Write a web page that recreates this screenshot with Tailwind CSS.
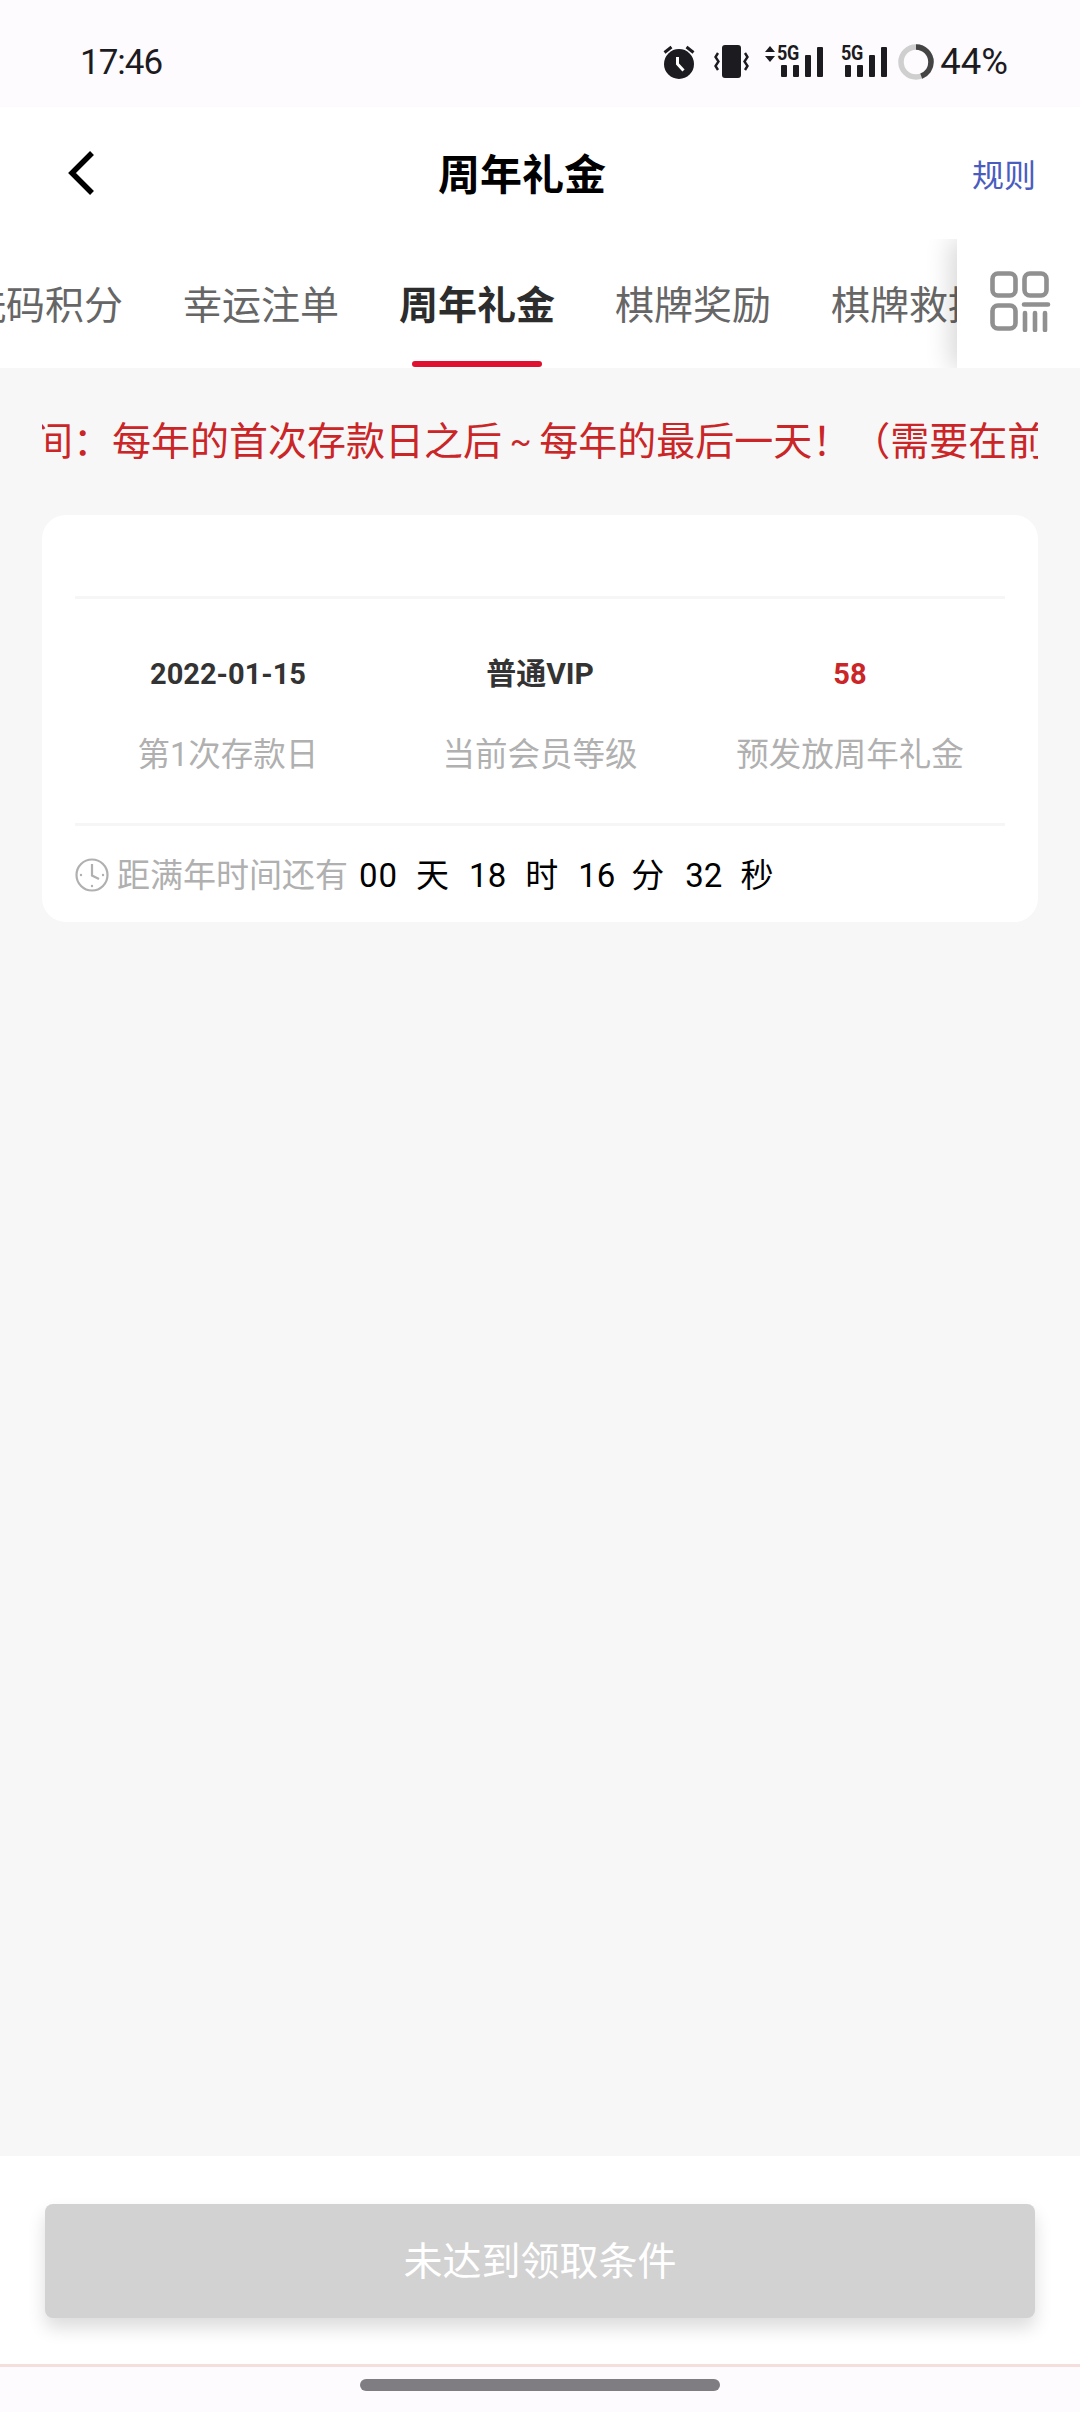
<!DOCTYPE html>
<html lang="zh-CN">
<head>
    <meta charset="UTF-8">
    <meta name="viewport" content="width=device-width, initial-scale=1.0">
    <title>周年礼金</title>
    <script src="https://cdn.jsdelivr.net/npm/@tailwindcss/browser@4"></script>
</head>
<body class="bg-[#f7f7f7] font-['Roboto','Noto_Sans_CJK_SC',sans-serif]">
    <div class="w-[1080px] h-[2412px] flex flex-col overflow-hidden">
        <!-- Status bar -->
        <div class="h-[107px] shrink-0 bg-[#fdfbfe] flex items-center justify-between pt-[17px] pl-[80px] pr-[72px] text-[#1c1b1f]">
            <span class="text-[35px] leading-none tracking-[-1px]">17:46</span>
            <div class="flex items-center">
                <svg width="32" height="34" viewBox="0 0 32 34" class="mr-[19px]">
                    <circle cx="16" cy="19" r="15" fill="#1c1b1f"/>
                    <path d="M1.5 7.5 8.5 2M30.5 7.5 23.5 2" stroke="#1c1b1f" stroke-width="3" fill="none"/>
                    <path d="M14.5 12v7l6 6.5" stroke="#fff" stroke-width="3" fill="none"/>
                </svg>
                <svg width="36" height="34" viewBox="0 0 36 34" class="mr-[15px]">
                    <rect x="8" y="0" width="19" height="33" rx="3" fill="#1c1b1f"/>
                    <path d="M4 8 1.5 12 4.5 16.5 1.5 21 4 25M31 8 33.5 12 30.5 16.5 33.5 21 31 25" stroke="#1c1b1f" stroke-width="2.4" fill="none"/>
                </svg>
                <div class="relative w-[58px] h-[34px] mr-[18px]">
                    <svg width="10" height="16" viewBox="0 0 10 16" class="absolute left-0 top-[1px]">
                        <path d="M5 0 10 6H0ZM5 16 10 10H0Z" fill="#1c1b1f"/>
                    </svg>
                    <span class="absolute left-[12px] top-[-2px] text-[20px] leading-[20px] font-bold tracking-[-0.5px] scale-x-90 origin-left">5G</span>
                    <div class="absolute left-[16px] bottom-[2px] flex items-end gap-[6px]">
                        <span class="block w-[6px] h-[12px] bg-[#1c1b1f] rounded-[1px]"></span>
                        <span class="block w-[6px] h-[12px] bg-[#1c1b1f] rounded-[1px]"></span>
                        <span class="block w-[6px] h-[22px] bg-[#1c1b1f] rounded-[1px]"></span>
                        <span class="block w-[6px] h-[30px] bg-[#1c1b1f] rounded-[1px]"></span>
                    </div>
                </div>
                <div class="relative w-[46px] h-[34px] mr-[11px]">
                    <span class="absolute left-0 top-[-2px] text-[20px] leading-[20px] font-bold tracking-[-0.5px] scale-x-90 origin-left">5G</span>
                    <div class="absolute left-[4px] bottom-[2px] flex items-end gap-[6px]">
                        <span class="block w-[6px] h-[12px] bg-[#1c1b1f] rounded-[1px]"></span>
                        <span class="block w-[6px] h-[12px] bg-[#1c1b1f] rounded-[1px]"></span>
                        <span class="block w-[6px] h-[22px] bg-[#1c1b1f] rounded-[1px]"></span>
                        <span class="block w-[6px] h-[30px] bg-[#1c1b1f] rounded-[1px]"></span>
                    </div>
                </div>
                <svg width="36" height="36" viewBox="0 0 36 36" class="mr-[6px]">
                    <circle cx="18" cy="18" r="15" fill="none" stroke="#cfcfcf" stroke-width="5.5"/>
                    <circle cx="18" cy="18" r="15" fill="none" stroke="#444" stroke-width="5.5" stroke-dasharray="41.5 100" transform="rotate(-90 18 18)"/>
                </svg>
                <span class="text-[36.5px] leading-none">44%</span>
            </div>
        </div>

        <!-- Title bar -->
        <div class="h-[132px] shrink-0 bg-white relative flex items-center justify-center pr-[36px] pt-[5px]">
            <svg width="30" height="46" viewBox="0 0 30 46" class="absolute left-[66px] top-[43px]">
                <path d="M26 3 6 23 26 43" stroke="#000" stroke-width="5.5" fill="none"/>
            </svg>
            <span class="text-[42px] font-bold text-black">周年礼金</span>
            <span class="absolute right-[44px] text-[32px] text-[#4a5cc0]">规则</span>
        </div>

        <!-- Tabs -->
        <div class="h-[129px] shrink-0 bg-white relative overflow-hidden">
            <div class="flex gap-[60px] ml-[-33px] pt-[44px] text-[39px] leading-[46px] text-[#666] whitespace-nowrap">
                <span>洗码积分</span>
                <span>幸运注单</span>
                <span class="relative font-bold text-[#2c2c2c]">周年礼金
                    <span class="absolute left-[13px] right-[13px] top-[78px] h-[6px] rounded-full bg-[#e01030]"></span>
                </span>
                <span>棋牌奖励</span>
                <span>棋牌救援金</span>
            </div>
            <div class="absolute right-0 top-0 bottom-0 w-[123px] bg-white shadow-[-6px_0_24px_rgba(0,0,0,0.16)] flex items-center justify-center">
                <svg width="62" height="62" viewBox="0 0 62 62" class="mr-[-3px] mb-[5px]">
                    <g fill="none" stroke="#909090" stroke-width="4.6">
                        <rect x="3.5" y="3.5" width="23" height="22" rx="5.5"/>
                        <rect x="35.5" y="3.5" width="22" height="22" rx="5.5"/>
                        <rect x="3.5" y="35.5" width="23" height="23" rx="5.5"/>
                        <path d="M35 34.5H59M36 43V60M46 43V60M56 43V60" stroke-linecap="round"/>
                    </g>
                </svg>
            </div>
        </div>

        <!-- Content -->
        <div class="flex-1 px-[42px]">
            <div class="h-[147px] flex items-center overflow-hidden">
                <p class="text-[39px] leading-[46px] text-[#ca2527] whitespace-nowrap ml-[-47px] mt-[2px]">时间：每年的首次存款日之后 <span class="relative top-[-3px] mx-[-2px] text-[32px]">~</span> 每年的最后一天！（需要在前一年有存款）</p>
            </div>
            <div class="h-[407px] bg-white rounded-[24px] px-[33px]">
                <div class="h-[84px] border-b-[3px] border-[#f6f6f6]"></div>
                <div class="h-[227px] border-b-[3px] border-[#f6f6f6] grid grid-cols-[306px_318px_302px] text-center">
                    <div class="pt-[55px]">
                        <p class="text-[29px] leading-[40px] font-bold text-[#333]">2022-01-15</p>
                        <p class="text-[32.5px] leading-[40px] mt-[41px] text-[#b0b0b0]">第1次存款日</p>
                    </div>
                    <div class="pt-[55px]">
                        <p class="text-[30px] leading-[40px] font-bold text-[#333]">普通VIP</p>
                        <p class="text-[32.5px] leading-[40px] mt-[41px] text-[#b0b0b0]">当前会员等级</p>
                    </div>
                    <div class="pt-[55px]">
                        <p class="text-[29px] leading-[40px] font-bold text-[#ca2527]">58</p>
                        <p class="text-[32.5px] leading-[40px] mt-[41px] text-[#b0b0b0]">预发放周年礼金</p>
                    </div>
                </div>
                <div class="h-[96px] flex items-center pt-[4px] whitespace-nowrap text-[33px] text-black">
                    <svg width="34" height="36" viewBox="0 0 34 36" class="mr-[8px] shrink-0 mb-[2px]">
                        <circle cx="17" cy="18" r="15.5" fill="none" stroke="#b0b0b0" stroke-width="2.2"/>
                        <path d="M17 7v11.5l7 3.5" fill="none" stroke="#b0b0b0" stroke-width="2.2"/>
                        <circle cx="6" cy="18" r="1.2" fill="#b0b0b0"/>
                        <circle cx="17" cy="29" r="1.2" fill="#b0b0b0"/>
                        <circle cx="28" cy="18" r="1.2" fill="#b0b0b0"/>
                    </svg>
                    <span class="text-[#b0b0b0]">距满年时间还有</span>
                    <span class="ml-[11px] tracking-[1px]">00</span>
                    <span class="ml-[18px]">天</span>
                    <span class="ml-[20px]">18</span>
                    <span class="ml-[19px]">时</span>
                    <span class="ml-[20px]">16</span>
                    <span class="ml-[16px]">分</span>
                    <span class="ml-[21px]">32</span>
                    <span class="ml-[18px]">秒</span>
                </div>
            </div>
        </div>

        <!-- Bottom action -->
        <div class="h-[208px] shrink-0 bg-white pt-[48px] px-[45px]">
            <div class="h-[114px] rounded-[8px] bg-[#d2d2d2] shadow-[0_10px_18px_rgba(0,0,0,0.14)] flex items-center justify-center pt-[2px] text-[39px] text-white">未达到领取条件</div>
        </div>
        <div class="h-[48px] shrink-0 bg-[#fdfbfe] border-t-[3px] border-[#f5dfdc] flex justify-center pt-[12px]">
            <div class="w-[360px] h-[12px] rounded-full bg-[#7f7d81]"></div>
        </div>
    </div>
</body>
</html>
